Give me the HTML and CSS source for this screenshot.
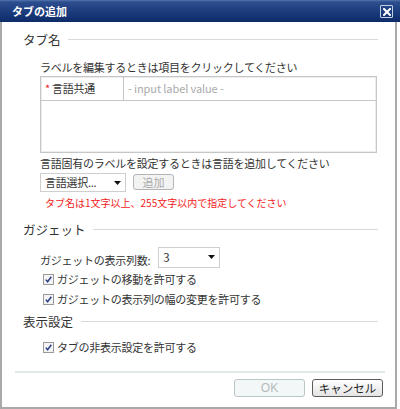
FILE: index.html
```html
<!DOCTYPE html>
<html lang="ja">
<head>
<meta charset="utf-8">
<title>タブの追加</title>
<link rel="stylesheet" href="styles.css">
</head>
<body>
<div class="dialog">
  <div class="titlebar">
    <span class="title">タブの追加</span>
    <span class="close"><svg width="8" height="8" viewBox="0 0 8 8"><path d="M1 1 L7 7 M7 1 L1 7" stroke="#fff" stroke-width="2" stroke-linecap="square"/></svg></span>
  </div>
  <div class="body">
    <div class="section-head"><span class="section-title">タブ名</span><span class="rule"></span></div>
    <div class="section-content">
      <p class="hint">ラベルを編集するときは項目をクリックしてください</p>
      <div class="label-table">
        <div class="label-row">
          <div class="label-lang"><span class="req">*</span>言語共通</div>
          <div class="label-value">- input label value -</div>
        </div>
        <div class="label-empty"></div>
      </div>
      <p class="hint hint2">言語固有のラベルを設定するときは言語を追加してください</p>
      <div class="lang-row">
        <div class="select lang-select"><span>言語選択...</span><svg class="arrow" width="7" height="4" viewBox="0 0 7 4"><path d="M0 0 H7 L3.5 4 Z" fill="#111"/></svg></div>
        <span class="btn btn-add">追加</span>
      </div>
      <p class="error">タブ名は1文字以上、255文字以内で指定してください</p>
    </div>

    <div class="section-head head-gadget"><span class="section-title">ガジェット</span><span class="rule"></span></div>
    <div class="section-content">
      <div class="cols-row">
        <span class="cols-label">ガジェットの表示列数:</span>
        <div class="select cols-select"><span>3</span><svg class="arrow" width="7" height="4" viewBox="0 0 7 4"><path d="M0 0 H7 L3.5 4 Z" fill="#111"/></svg></div>
      </div>
      <div class="check-row check-first">
        <svg class="cb" width="11" height="11" viewBox="0 0 11 11"><rect x="0.5" y="0.5" width="10" height="10" fill="#f4f4f4" stroke="#9a9a9a"/><path d="M2.8 5.6 L4.6 7.8 L8.3 2.8" fill="none" stroke="#2b3f86" stroke-width="1.5"/></svg>
        <span>ガジェットの移動を許可する</span>
      </div>
      <div class="check-row">
        <svg class="cb" width="11" height="11" viewBox="0 0 11 11"><rect x="0.5" y="0.5" width="10" height="10" fill="#f4f4f4" stroke="#9a9a9a"/><path d="M2.8 5.6 L4.6 7.8 L8.3 2.8" fill="none" stroke="#2b3f86" stroke-width="1.5"/></svg>
        <span>ガジェットの表示列の幅の変更を許可する</span>
      </div>
    </div>

    <div class="section-head head-display"><span class="section-title">表示設定</span><span class="rule"></span></div>
    <div class="section-content">
      <div class="check-row check-display">
        <svg class="cb" width="11" height="11" viewBox="0 0 11 11"><rect x="0.5" y="0.5" width="10" height="10" fill="#f4f4f4" stroke="#9a9a9a"/><path d="M2.8 5.6 L4.6 7.8 L8.3 2.8" fill="none" stroke="#2b3f86" stroke-width="1.5"/></svg>
        <span>タブの非表示設定を許可する</span>
      </div>
    </div>

    <div class="footer">
      <span class="btn btn-ok">OK</span>
      <span class="btn btn-cancel">キャンセル</span>
    </div>
  </div>
</div>
</body>
</html>
```

FILE: styles.css
```css
* { box-sizing: border-box; }
html, body { margin: 0; padding: 0; background: #fff; }
body {
  font-family: "Noto Sans CJK JP", "Noto Sans", sans-serif;
  font-size: 11px;
  color: #333;
  letter-spacing: -0.25px;
}
p { margin: 0; }

.dialog {
  width: 400px;
  height: 409px;
  display: flex;
  flex-direction: column;
}

.titlebar {
  height: 22px;
  flex: none;
  background: linear-gradient(to bottom, #5574ad 0px, #2c4e8e 2px, #1c3d7e 50%, #0d2b68 100%);
  display: flex;
  align-items: center;
  justify-content: space-between;
  padding: 0 7px 0 12px;
}
.title {
  color: #fff;
  font-weight: bold;
  font-size: 11px;
  line-height: 14px;
  letter-spacing: 0;
}
.close {
  width: 13px;
  height: 13px;
  border: 1px solid #c3cfe4;
  border-radius: 1px;
  display: flex;
  align-items: center;
  justify-content: center;
  margin-top: 1px;
}

.body {
  flex: 1;
  width: 397px;
  border-left: 2px solid #a9a9a9;
  border-right: 2px solid #a9a9a9;
  border-bottom: 2px solid #a9a9a9;
  padding: 10px 17px 0 21px;
  display: flex;
  flex-direction: column;
}

.section-head {
  display: flex;
  align-items: center;
  gap: 7px;
  height: 16px;
}
.section-title {
  font-size: 12.5px;
  line-height: 16px;
  color: #333;
  letter-spacing: 0;
}
.rule {
  flex: 1;
  height: 1px;
  background: #d9d9d9;
  margin-top: -1px;
}
.head-gadget { margin-top: 11px; }
.head-display { margin-top: 5px; gap: 8px; }

.section-content {
  margin-left: 17px;
  margin-right: 1px;
}

.hint {
  margin-top: 11px;
  line-height: 16px;
}
.hint2 { margin-top: 2px; }

.label-table {
  margin-top: 1px;
  border: 1px solid #c6c6c6;
  box-shadow: inset 0 0 0 1px #ececec;
}
.label-row {
  display: flex;
  height: 24px;
  border-bottom: 1px solid #c6c6c6;
}
.label-lang {
  width: 83px;
  border-right: 1px solid #c6c6c6;
  padding-left: 4px;
  line-height: 23px;
  color: #333;
}
.req {
  color: #e22;
  margin-right: 2px;
}
.label-value {
  padding-left: 4px;
  line-height: 23px;
  color: #aaa;
  letter-spacing: -0.1px;
}
.label-empty { height: 51px; }

.lang-row {
  margin-top: 2px;
  display: flex;
  align-items: flex-start;
  gap: 7px;
}
.select {
  border: 1px solid #cfcfcf;
  background: #fff;
  display: flex;
  align-items: center;
  justify-content: space-between;
}
.lang-select {
  width: 86px;
  height: 19px;
  padding: 0 4px 0 4px;
  line-height: 17px;
}
.btn {
  display: inline-flex;
  align-items: center;
  justify-content: center;
  border-radius: 3px;
  letter-spacing: 0;
}
.btn-add {
  width: 41px;
  height: 16px;
  margin-top: 1px;
  border: 1px solid #b4b4b4;
  background: #f3f3f3;
  color: #aaa;
  font-size: 11px;
  line-height: 14px;
}
.error {
  margin-top: 3px;
  margin-left: 5px;
  line-height: 16px;
  font-size: 10px;
  color: #f21a1a;
  letter-spacing: 0;
}

.cols-row {
  margin-top: 9px;
  display: flex;
  align-items: flex-end;
  gap: 8px;
  height: 21px;
}
.cols-label { line-height: 16px; }
.cols-select {
  width: 62px;
  height: 21px;
  padding: 0 4px 2px 4px;
  line-height: 16px;
  font-size: 11.5px;
}

.check-row {
  display: flex;
  align-items: center;
  gap: 3px;
  height: 20px;
  padding-left: 3px;
}
.check-first { margin-top: 1px; }
.check-display { margin-top: 7px; }
.cb { flex: none; }

.footer {
  margin: 14px -7px 0 -8px;
  border-top: 2px solid #e3e9e9;
  padding: 6px 2px 0 0;
  display: flex;
  justify-content: flex-end;
  gap: 7px;
}
.btn-ok {
  width: 71px;
  height: 18px;
  border: 1px solid #b9c6c6;
  background: #f3f7f7;
  color: #b3bcbc;
  font-family: "Liberation Sans", sans-serif;
  font-size: 12px;
}
.btn-cancel {
  width: 71px;
  height: 18px;
  border: 1px solid #5c5c5c;
  background: linear-gradient(#ffffff, #e4e4e4);
  color: #1e1e1e;
  font-size: 11.5px;
  line-height: 14px;
}
```
